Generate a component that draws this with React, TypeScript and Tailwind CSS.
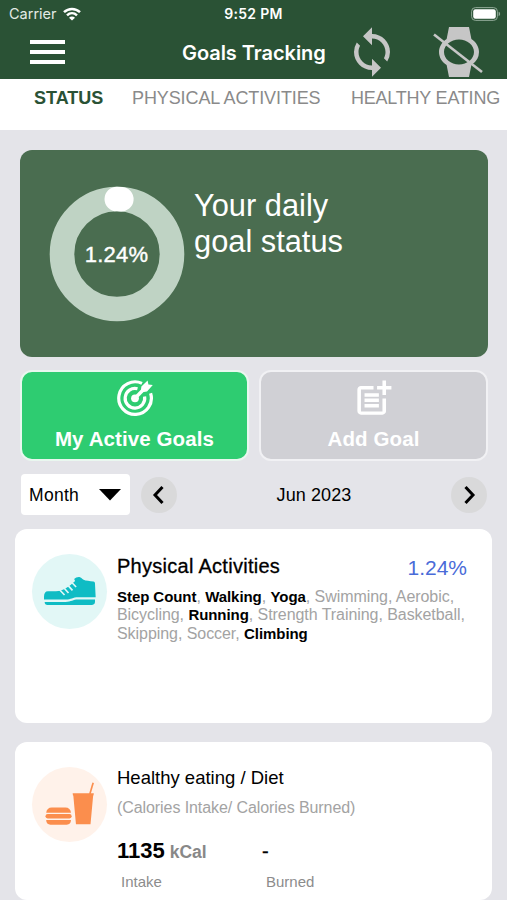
import React from 'react';
import { MdPostAdd, MdSync } from 'react-icons/md';

interface Activity {
  name: string;
  active: boolean;
}

const activityRows: Activity[][] = [
  [
    { name: 'Step Count', active: true },
    { name: 'Walking', active: true },
    { name: 'Yoga', active: true },
    { name: 'Swimming', active: false },
    { name: 'Aerobic', active: false },
  ],
  [
    { name: 'Bicycling', active: false },
    { name: 'Running', active: true },
    { name: 'Strength Training', active: false },
    { name: 'Basketball', active: false },
  ],
  [
    { name: 'Skipping', active: false },
    { name: 'Soccer', active: false },
    { name: 'Climbing', active: true },
  ],
];

const WifiIcon = () => (
  <svg viewBox="0 0 18 14" className="w-[18px] h-[14px]" fill="none" stroke="#fff" strokeWidth="2.5">
    <path d="M1 5.2C5.6.8 12.4.8 17 5.2" />
    <path d="M4 8.3c2.9-2.7 7.1-2.7 10 0" />
    <path d="M9 13.6 6 10.7c1.7-1.6 4.3-1.6 6 0z" fill="#fff" stroke="none" />
  </svg>
);

const BatteryIcon = () => (
  <svg viewBox="0 0 30 14" className="w-[30px] h-[14px]">
    <rect x=".6" y=".6" width="25.8" height="12.8" rx="3.8" fill="none" stroke="#8fa896" strokeWidth="1" />
    <rect x="2.2" y="2.2" width="22.6" height="9.6" rx="2.2" fill="#fff" />
    <path d="M27.6 4.8c2 .6 2 3.8 0 4.4z" fill="#8fa896" />
  </svg>
);

const WatchOffIcon = () => (
  <svg viewBox="0 0 60 50" className="w-[60px] h-[50px]">
    <path
      transform="scale(2.5 2.083)"
      fill="#c6c6c6"
      d="M20 12c0-2.54-1.19-4.81-3.04-6.27L16 0H8l-.95 5.73C5.19 7.19 4 9.45 4 12s1.19 4.81 3.05 6.27L8 24h8l.96-5.73A7.976 7.976 0 0 0 20 12zM6 12c0-3.31 2.69-6 6-6s6 2.69 6 6-2.69 6-6 6-6-2.69-6-6z"
    />
    <path d="M5 7.4 53 45" stroke="#c6c6c6" strokeWidth="2.6" />
  </svg>
);

const TargetIcon = () => (
  <svg viewBox="0 0 38 38" className="w-[38px] h-[38px]" fill="none" stroke="#fff" strokeWidth="3.2">
    <path d="M26 4.4A16.3 16.3 0 1 0 34.6 14.2" />
    <path d="M21.5 9.8A9.8 9.8 0 1 0 28.6 17.6" />
    <circle cx="19" cy="19.3" r="3.9" fill="#fff" stroke="none" />
    <path d="M19 19.3 28.5 9.5" strokeWidth="3.4" />
    <path d="M24.6 13.4 25.4 7.4 31.6 1.4 32.4 5.4 36.8 6 31 12.6z" fill="#fff" stroke="none" />
  </svg>
);

const ShoeIcon = () => (
  <svg viewBox="99 153 160 90" className="w-[53px] h-[30px]">
    <path
      fill="#0fbcc4"
      d="M102 221v-8c0-11 4-17 12-17h24c20 0 40-14 58-31l-3-6c4-4 11-7 16-6 5 1 7 5 11 7 9 5 20 4 31 6 4 1 5 3 5 8l2 40h-52c-18 0-22 7-38 7z"
    />
    <path d="M144 186 164 207M157 180 176 201M169 172 188 193M181 164 199 183" stroke="#e2f7f6" strokeWidth="5" />
    <path fill="#0fbcc4" d="M104 228h63c18 0 22-7 38-7h51v6c0 7-3 10-9 10H113c-6 0-9-3-9-9z" />
  </svg>
);

const MealIcon = () => (
  <svg viewBox="101 139 156 136" className="w-[52px] h-[45px]" fill="#fb8e4d">
    <path d="M107 232c1-10 7-16 17-16h41c10 0 16 6 17 16z" />
    <rect x="105" y="236" width="79" height="13" rx="6.5" />
    <path d="M107 254h75c0 9-5 14-13 14h-49c-8 0-13-5-13-14z" />
    <path d="M187 173h64l-1 7h-1l-8 87h-44l-8-87h-1z" />
    <path d="M239 175 249 141" stroke="#fb8e4d" strokeWidth="5" />
  </svg>
);

const ProgressRing = () => (
  <div className="relative w-[136px] h-[136px] flex items-center justify-center">
    <svg viewBox="0 0 136 136" className="absolute inset-0" fill="none" strokeWidth="24.6">
      <circle cx="68" cy="68" r="55" stroke="#bfd3c4" />
      <path d="M67.8 13A55 55 0 0 1 72.3 13.2" stroke="#fff" strokeLinecap="round" />
    </svg>
    <span className="relative pt-px pr-px text-[22px] leading-none tracking-[0.2px] text-white [-webkit-text-stroke:0.4px_white]">
      1.24%
    </span>
  </div>
);

const Chevron = ({ d }: { d: string }) => (
  <button className="w-9 h-9 rounded-full bg-[#d9d9da] flex items-center justify-center">
    <svg viewBox="0 0 20 20" className="w-5 h-5" fill="none" stroke="#000" strokeWidth="3">
      <path d={d} />
    </svg>
  </button>
);

const Header = () => (
  <header className="h-[79px] bg-[#2a5235] text-white">
    <div className="h-[27px] grid grid-cols-3 items-center pl-[9px] pr-[9px] font-['Inter',sans-serif]">
      <div className="flex items-center gap-[6px] text-[14.5px] text-[#e3ebe5]">
        <span>Carrier</span>
        <WifiIcon />
      </div>
      <span className="text-center text-[14px] font-semibold tracking-[0.3px]">9:52 PM</span>
      <div className="flex justify-end -mr-[3px]">
        <BatteryIcon />
      </div>
    </div>
    <div className="h-[50px] flex items-center">
      <button className="ml-[30px] w-[35px] flex flex-col gap-[6px]">
        <span className="h-1 w-full bg-white" />
        <span className="h-1 w-full bg-white" />
        <span className="h-1 w-full bg-white" />
      </button>
      <h1 className="ml-[117px] w-[144px] pt-px text-[20px] font-semibold tracking-[-0.05px] whitespace-nowrap font-['Inter',sans-serif]">
        Goals Tracking
      </h1>
      <MdSync className="ml-[19px] size-[54px] text-[#c6c6c6] shrink-0" />
      <div className="ml-[30px] shrink-0">
        <WatchOffIcon />
      </div>
    </div>
  </header>
);

const Tabs = () => (
  <nav className="h-[51px] bg-white flex items-start pt-[7px] pl-[34px] text-[18px] leading-6 text-[#8a8a8a] whitespace-nowrap">
    <span className="w-[98px] font-bold text-[#2a5235]">STATUS</span>
    <span className="w-[219px] tracking-[-0.1px]">PHYSICAL ACTIVITIES</span>
    <span className="tracking-[-0.22px]">HEALTHY EATING</span>
  </nav>
);

export default function App() {
  return (
    <div className="w-full h-[900px] overflow-hidden bg-[#e4e4e9] text-black font-['Liberation_Sans',Arial,sans-serif]">
      <Header />
      <Tabs />

      {/* Daily goal summary */}
      <section className="mt-5 ml-5 mr-[19px] h-[207px] rounded-xl bg-[#4a6d50] flex pl-[29px]">
        <div className="pt-9">
          <ProgressRing />
        </div>
        <p className="ml-[9px] pt-[38px] text-[30.8px] leading-[35.5px] text-white">
          Your daily
          <br />
          goal status
        </p>
      </section>

      {/* Goal actions */}
      <div className="mt-[13px] ml-5 mr-[19px] grid grid-cols-2 gap-[10px] text-white text-[20.5px] font-bold tracking-[0.1px]">
        <button className="h-[91px] rounded-xl border-2 border-[#e9f7ef] bg-[#2ecc71] flex flex-col items-center pt-[7px]">
          <TargetIcon />
          <span className="mt-[10px] leading-6">My Active Goals</span>
        </button>
        <button className="h-[91px] rounded-xl border-2 border-[#f1f1f4] bg-[#d0d0d5] flex flex-col items-center pt-[5px]">
          <MdPostAdd className="size-[43px]" />
          <span className="mt-[7px] leading-6">Add Goal</span>
        </button>
      </div>

      {/* Period picker */}
      <div className="mt-[13px] ml-[21px] mr-5 h-[41px] flex items-center">
        <button className="w-[109px] h-full rounded bg-white flex items-center justify-between pl-2 pr-[9px]">
          <span className="pt-px text-[17.5px] tracking-[0.3px]">Month</span>
          <svg viewBox="0 0 22 12" className="w-[22px] h-3">
            <path d="M0 0h22L11 11.5z" />
          </svg>
        </button>
        <div className="ml-[11px]">
          <Chevron d="M13.5 2 6 10l7.5 8" />
        </div>
        <span className="flex-1 pt-px text-center text-[18px] tracking-[0.1px]">Jun 2023</span>
        <Chevron d="M6.5 2 14 10l-7.5 8" />
      </div>

      {/* Physical activities */}
      <section className="mt-[14px] ml-[15px] mr-[15px] h-[194px] rounded-xl bg-white flex pl-[17px] pt-[25px]">
        <div className="size-[75px] rounded-full bg-[#e2f7f6] flex items-center justify-center">
          <ShoeIcon />
        </div>
        <div className="ml-[10px] flex-1">
          <div className="flex justify-between pr-[25px]">
            <h2 className="text-[20px] leading-6 tracking-[0.28px] [-webkit-text-stroke:0.3px_black]">
              Physical Activities
            </h2>
            <span className="pt-[2px] text-[21px] leading-6 text-[#4a6bd8]">1.24%</span>
          </div>
          <div className="mt-2 text-[16px] leading-[18.4px] tracking-[-0.06px] text-[#a3a3a3] whitespace-nowrap">
            {activityRows.map((row, r) => (
              <p key={r}>
                {row.map((item, i) => (
                  <React.Fragment key={item.name}>
                    <span className={item.active ? 'text-[15px] font-bold text-black' : ''}>{item.name}</span>
                    {r === activityRows.length - 1 && i === row.length - 1 ? '' : ', '}
                  </React.Fragment>
                ))}
              </p>
            ))}
          </div>
        </div>
      </section>

      {/* Healthy eating */}
      <section className="mt-[19px] ml-[15px] mr-[15px] h-[158px] rounded-xl bg-white flex pl-[17px] pt-[25px]">
        <div className="size-[75px] rounded-full bg-[#fff2ea] flex items-center justify-center">
          <MealIcon />
        </div>
        <div className="-mt-px ml-[10px] flex-1 whitespace-nowrap">
          <h2 className="text-[18.5px] leading-6">Healthy eating / Diet</h2>
          <p className="mt-2 text-[16px] leading-5 tracking-[-0.08px] text-[#a3a3a3]">(Calories Intake/ Calories Burned)</p>
          <div className="mt-[21px] flex items-baseline leading-6">
            <p className="w-[145px]">
              <span className="text-[22px] font-bold">1135</span>
              <span className="ml-[5px] text-[17.5px] font-bold text-[#888]">kCal</span>
            </p>
            <span className="text-[20px] [-webkit-text-stroke:0.3px_black]">-</span>
          </div>
          <div className="mt-[7px] pl-1 flex text-[15px] leading-5 text-[#8c8c8c]">
            <span className="w-[145px]">Intake</span>
            <span>Burned</span>
          </div>
        </div>
      </section>
    </div>
  );
}
